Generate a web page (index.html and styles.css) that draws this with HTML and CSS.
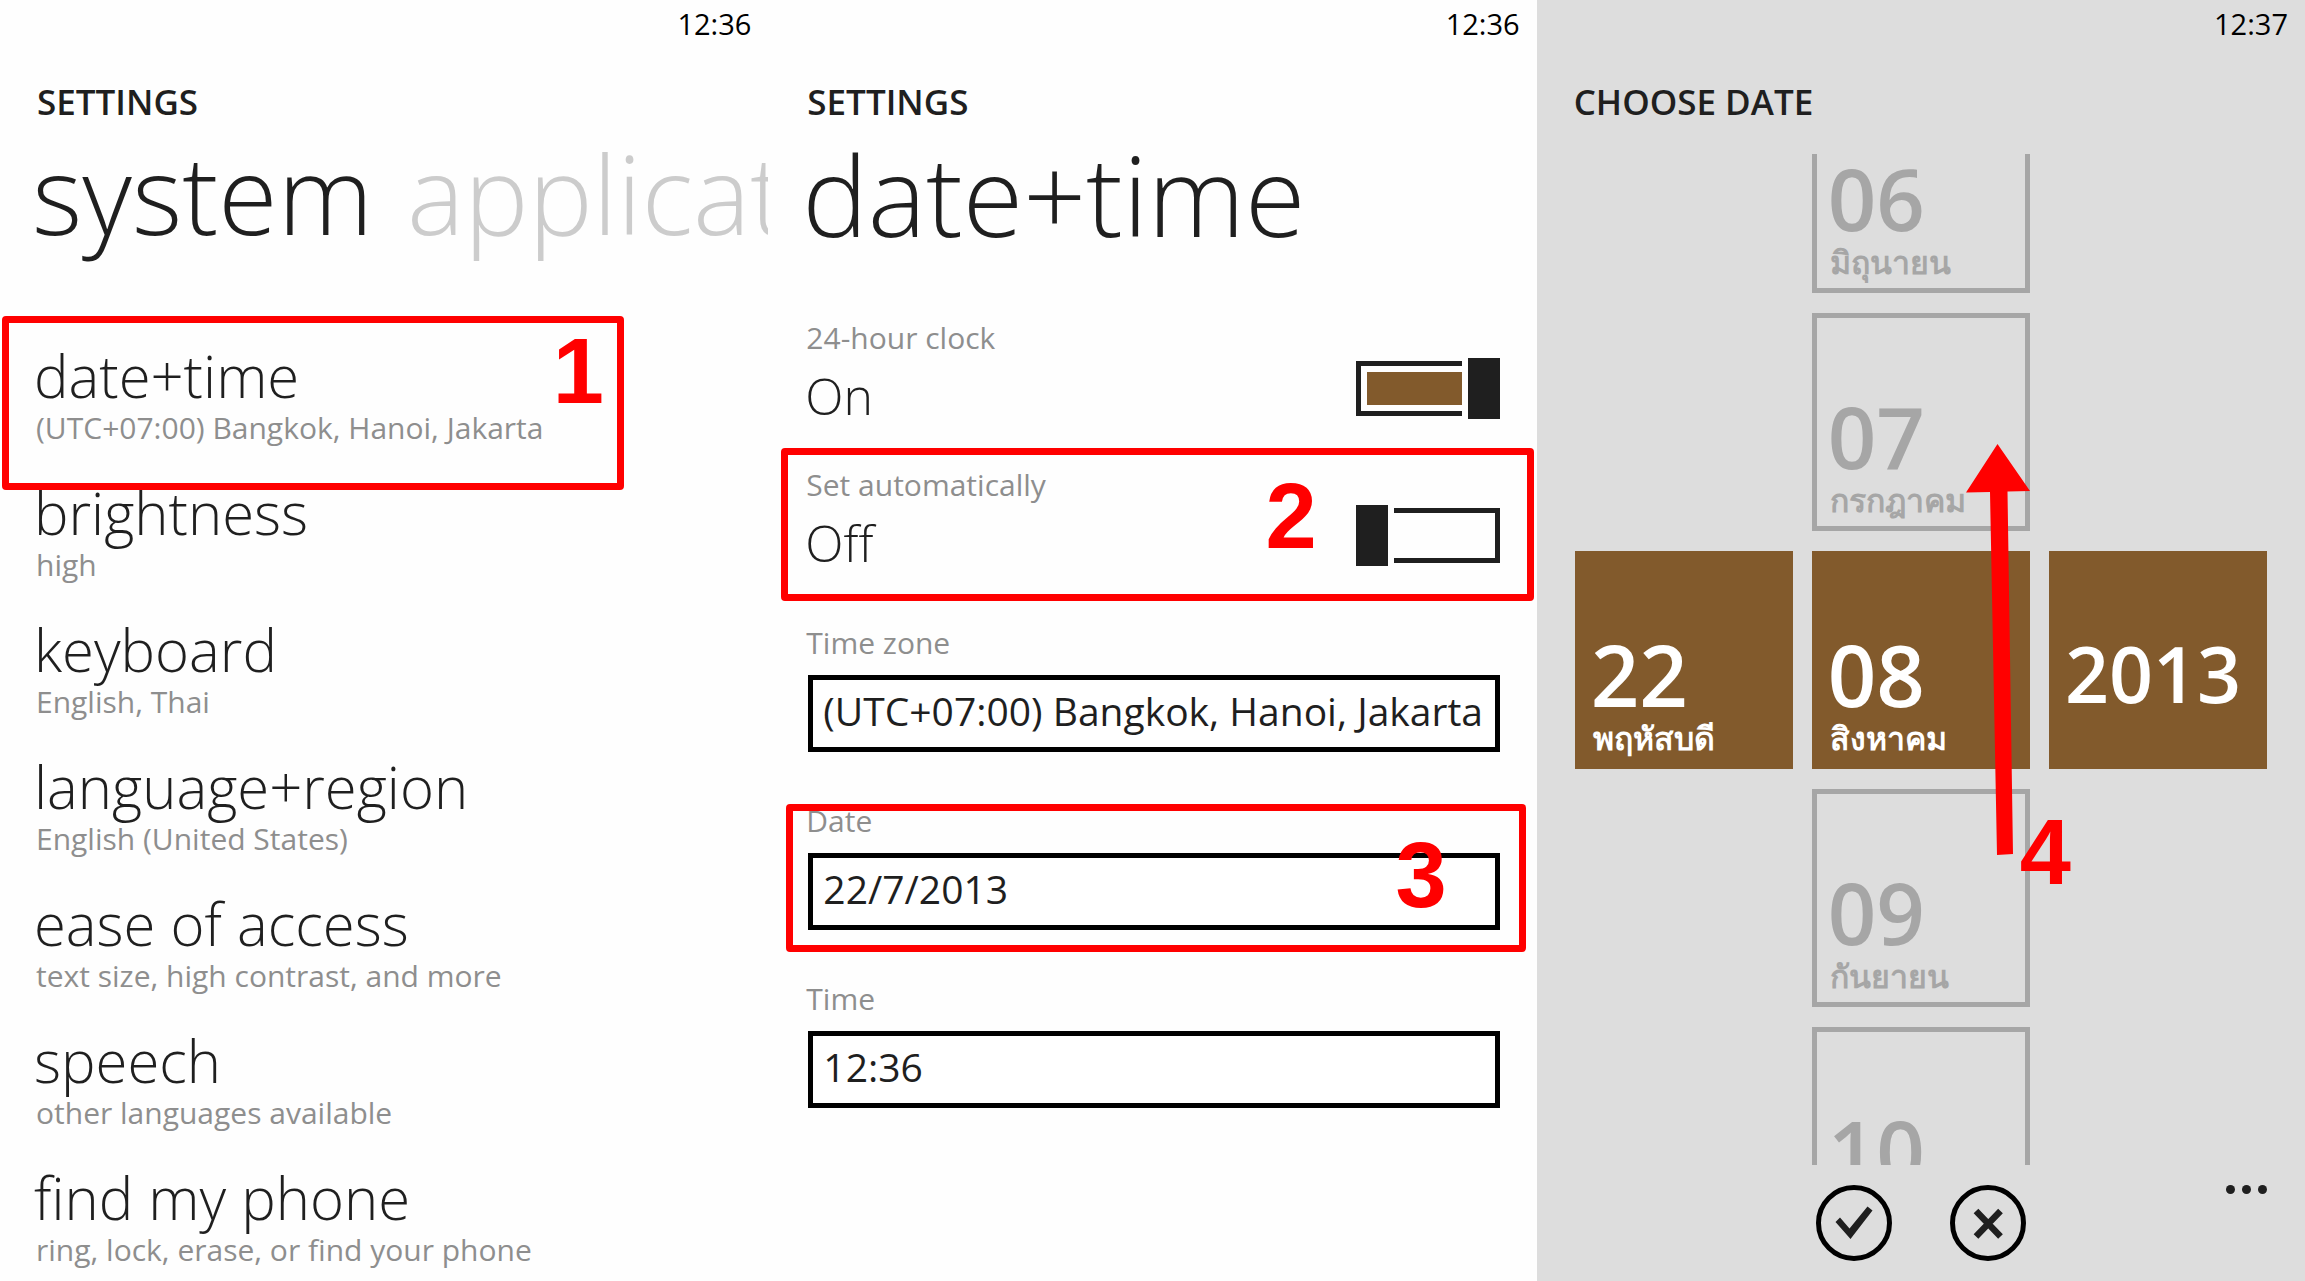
FILE: index.html
```html
<!DOCTYPE html>
<html lang="en">
<head>
  <meta charset="utf-8">
  <title>Change the date</title>
  <link rel="stylesheet" href="styles.css">
</head>
<body>
  <main class="screens">
    <section class="screen settings">
      <div class="clock">12:36</div>
      <div class="app-name">SETTINGS</div>
      <div class="pivot">
        <h1>system</h1>
        <h1 class="inactive">applications</h1>
      </div>

      <nav class="menu">
        <a href="#" class="menu-item">
          <span class="title">date+time</span>
          <span class="hint">(UTC+07:00) Bangkok, Hanoi, Jakarta</span>
          <span class="callout step-1"><b class="step">1</b></span>
        </a>
        <a href="#" class="menu-item">
          <span class="title">brightness</span>
          <span class="hint">high</span>
        </a>
        <a href="#" class="menu-item">
          <span class="title">keyboard</span>
          <span class="hint">English, Thai</span>
        </a>
        <a href="#" class="menu-item">
          <span class="title">language+region</span>
          <span class="hint">English (United States)</span>
        </a>
        <a href="#" class="menu-item">
          <span class="title">ease of access</span>
          <span class="hint">text size, high contrast, and more</span>
        </a>
        <a href="#" class="menu-item">
          <span class="title">speech</span>
          <span class="hint">other languages available</span>
        </a>
        <a href="#" class="menu-item">
          <span class="title">find my phone</span>
          <span class="hint">ring, lock, erase, or find your phone</span>
        </a>
      </nav>
    </section>

    <section class="screen date-time">
      <div class="clock">12:36</div>
      <div class="app-name">SETTINGS</div>
      <h1>date+time</h1>

      <div class="options">
        <div class="option">
          <label class="hint" for="clock24">24-hour clock</label>
          <span class="value">On</span>
          <input type="checkbox" id="clock24" class="toggle" checked>
        </div>
        <div class="option">
          <label class="hint" for="autoSet">Set automatically</label>
          <span class="value">Off</span>
          <input type="checkbox" id="autoSet" class="toggle">
          <div class="callout step-2"><b class="step">2</b></div>
        </div>
      </div>

      <div class="fields">
        <div class="field">
          <label class="hint" for="timeZone">Time zone</label>
          <select id="timeZone">
            <option>(UTC+07:00) Bangkok, Hanoi, Jakarta</option>
          </select>
        </div>
        <div class="field">
          <label class="hint" for="date">Date</label>
          <input type="text" id="date" value="22/7/2013">
          <div class="callout step-3"><b class="step">3</b></div>
        </div>
        <div class="field">
          <label class="hint" for="time">Time</label>
          <input type="text" id="time" value="12:36">
        </div>
      </div>
    </section>

    <section class="screen choose-date">
      <div class="clock">12:37</div>
      <div class="app-name">CHOOSE DATE</div>

      <div class="picker">
        <div class="column">
          <button type="button" class="tile selected">22<small lang="th">พฤหัสบดี</small></button>
        </div>
        <div class="column">
          <button type="button" class="tile">06<small lang="th">มิถุนายน</small></button>
          <button type="button" class="tile">07<small lang="th">กรกฎาคม</small></button>
          <button type="button" class="tile selected">08<small lang="th">สิงหาคม</small></button>
          <button type="button" class="tile">09<small lang="th">กันยายน</small></button>
          <button type="button" class="tile">10</button>
          <svg class="swipe" width="64" height="411" viewBox="0 0 64 411">
            <path d="M31.5 0L64 47L41.5 47.5L47 410L31 411L24 48L0 48.5Z" fill="#f00"/>
          </svg>
          <b class="step step-4">4</b>
        </div>
        <div class="column">
          <button type="button" class="tile selected year">2013</button>
        </div>
      </div>

      <div class="app-bar">
        <div class="actions">
          <button type="button" aria-label="Done">
            <svg width="76" height="76" viewBox="0 0 76 76">
              <circle cx="38" cy="38" r="35.5" fill="none" stroke="#000" stroke-width="5"/>
              <path d="M19.5 37L24 32.5L33.5 43.5L51.5 21.5L56.5 25.5L34.5 54Z" fill="#1f1f1f"/>
            </svg>
          </button>
          <button type="button" aria-label="Cancel">
            <svg width="76" height="76" viewBox="0 0 76 76">
              <circle cx="38" cy="38" r="35.5" fill="none" stroke="#000" stroke-width="5"/>
              <path d="M26 26L50.5 51.5M50.5 26L26 51.5" stroke="#1f1f1f" stroke-width="6.5"/>
            </svg>
          </button>
        </div>
        <button type="button" class="more" aria-label="More">
          <svg width="41" height="9" viewBox="0 0 41 9" fill="#1f1f1f">
            <circle cx="4.5" cy="4.5" r="4.5"/>
            <circle cx="20.5" cy="4.5" r="4.5"/>
            <circle cx="36.5" cy="4.5" r="4.5"/>
          </svg>
        </button>
      </div>
    </section>
  </main>
</body>
</html>
```

FILE: styles.css
```css
*,
*::before,
*::after {
  box-sizing: border-box;
}

body {
  margin: 0;
  font-family: "Open Sans", "Noto Sans", sans-serif;
  color: #1f1f1f;
  background: #fefefe;
}

.screens {
  display: grid;
  grid-template-columns: repeat(3, 1fr);
  height: 100vh;
}

.screen {
  display: flex;
  flex-direction: column;
  min-width: 0;
  padding: 0 38px;
}

.clock {
  margin-right: -21px;
  font-size: 29px;
  line-height: 48px;
  text-align: right;
  color: #000;
}

.app-name {
  margin: 30px 0 8px -1px;
  font-size: 35px;
  font-weight: 600;
  line-height: 48px;
}

h1 {
  margin: 0 0 0 -6px;
  font-size: 110px;
  font-weight: 300;
  line-height: 120px;
}

.hint {
  font-size: 30px;
  line-height: 40px;
  color: #8e8e8e;
}

/* settings list */
.settings {
  overflow: hidden;
}

.pivot {
  display: flex;
  gap: 40px;
}

.pivot h1 {
  font-size: 108px;
}

.pivot .inactive {
  color: #ccc;
}

.menu {
  display: flex;
  flex-direction: column;
  gap: 33px;
  margin-top: 90px;
}

.menu-item {
  position: relative;
  display: flex;
  flex-direction: column;
  margin-left: -2px;
  color: inherit;
  text-decoration: none;
}

.title {
  margin-left: -2px;
  font-size: 58px;
  font-weight: 300;
  line-height: 64px;
}

/* date+time */
.date-time {
  padding: 0 37px 0 40px;
}

.date-time .clock {
  margin-right: -20px;
}

.options {
  display: flex;
  flex-direction: column;
  gap: 37px;
  margin-top: 64px;
}

.option {
  position: relative;
  display: grid;
  grid-template-columns: 1fr auto;
  row-gap: 6px;
}

.option .hint,
.field .hint {
  margin-left: -2px;
}

.value {
  margin-left: -3px;
  font-size: 50px;
  font-weight: 300;
  line-height: 64px;
}

.toggle {
  appearance: none;
  position: relative;
  grid-column: 2;
  grid-row: 1 / 3;
  align-self: end;
  width: 144px;
  height: 61px;
  margin: 0 0 9px;
}

.toggle::before {
  content: "";
  position: absolute;
  top: 3px;
  right: 0;
  width: 106px;
  height: 55px;
  padding: 6px 0 6px 6px;
  border: 5px solid #1f1f1f;
  border-left: none;
  background-clip: content-box;
}

.toggle::after {
  content: "";
  position: absolute;
  top: 0;
  left: 0;
  width: 32px;
  height: 61px;
  background: #1f1f1f;
}

.toggle:checked::before {
  right: auto;
  left: 0;
  border-left: 5px solid #1f1f1f;
  border-right: none;
  background-color: #825a2c;
}

.toggle:checked::after {
  left: auto;
  right: 0;
}

.fields {
  display: flex;
  flex-direction: column;
  gap: 49px;
  margin-top: 48px;
}

.field {
  position: relative;
  display: flex;
  flex-direction: column;
  gap: 12px;
}

.field input,
.field select {
  appearance: none;
  width: 100%;
  height: 77px;
  padding: 0 10px 6px;
  border: 5px solid #000;
  border-radius: 0;
  background: #fff;
  font-family: inherit;
  font-size: 39px;
  color: inherit;
}

/* date picker */
.choose-date {
  min-height: 0;
  background: #ddd;
}

.picker {
  display: grid;
  grid-template-columns: repeat(3, 1fr);
  grid-template-rows: 100%;
  align-items: center;
  column-gap: 19px;
  flex: 1;
  min-height: 0;
  margin-top: 20px;
  overflow: hidden;
}

.column {
  position: relative;
  display: flex;
  flex-direction: column;
  gap: 20px;
}

.tile {
  display: flex;
  flex-direction: column;
  justify-content: flex-end;
  height: 218px;
  padding: 0 0 6px 11px;
  border: 5px solid #a6a6a6;
  background: none;
  font-family: inherit;
  font-size: 85px;
  font-weight: 600;
  line-height: 88px;
  text-align: left;
  color: #a6a6a6;
}

.tile small {
  margin-left: 2px;
  font-size: 32px;
  line-height: 40px;
}

.tile.selected {
  border-color: #825a2c;
  background: #825a2c;
  color: #fff;
}

/* no caption under the number */
.tile:not(:has(small)) {
  padding-bottom: 46px;
}

.tile.year {
  font-size: 77px;
}

.app-bar {
  display: grid;
  grid-template-columns: 1fr auto 1fr;
  align-items: start;
  height: 116px;
  padding-top: 20px;
}

.app-bar button {
  padding: 0;
  border: none;
  background: none;
}

.app-bar svg {
  display: block;
}

.actions {
  grid-column: 2;
  display: flex;
  gap: 58px;
}

.more {
  justify-self: end;
}

/* red marks drawn over the screens */
.callout {
  position: absolute;
  border: 7px solid #f00;
  border-radius: 4px;
  pointer-events: none;
}

.step {
  position: absolute;
  font-family: "Liberation Sans", sans-serif;
  font-size: 92px;
  font-weight: 700;
  line-height: 96px;
  color: #f00;
}

.step-1 {
  top: -28px;
  left: -34px;
  width: 622px;
  height: 174px;
}

.step-1 .step {
  top: 0;
  right: 13px;
}

.step-2 {
  top: -17px;
  left: -27px;
  right: -34px;
  height: 153px;
}

.step-2 .step {
  top: 13px;
  right: 210px;
}

.step-3 {
  top: 3px;
  left: -22px;
  right: -26px;
  height: 148px;
}

.step-3 .step {
  top: 16px;
  right: 72px;
}

.swipe {
  position: absolute;
  top: 369px;
  left: 154px;
}

.step-4 {
  top: 729px;
  left: 208px;
}
```
